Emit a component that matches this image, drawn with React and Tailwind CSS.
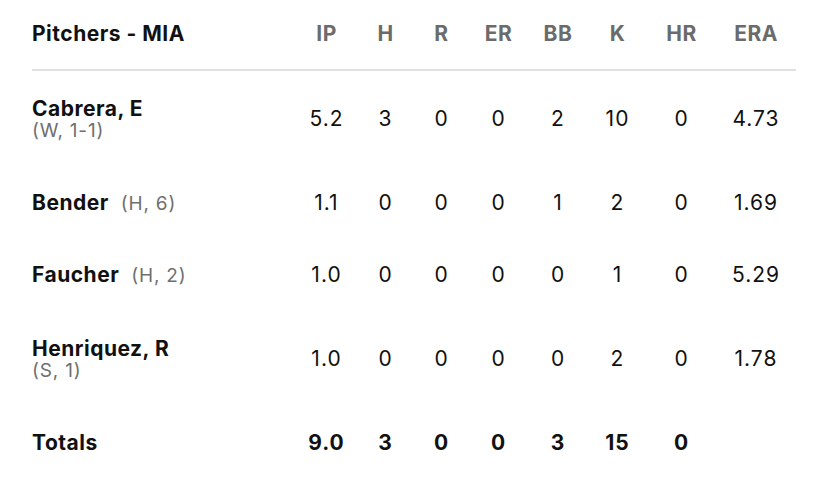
const COLS = ["IP", "H", "R", "ER", "BB", "K", "HR", "ERA"];

const PITCHERS = [
  { name: "Cabrera, E", note: "(W, 1-1)", stacked: true, stats: ["5.2", "3", "0", "0", "2", "10", "0", "4.73"] },
  { name: "Bender", note: "(H, 6)", stats: ["1.1", "0", "0", "0", "1", "2", "0", "1.69"] },
  { name: "Faucher", note: "(H, 2)", stats: ["1.0", "0", "0", "0", "0", "1", "0", "5.29"] },
  { name: "Henriquez, R", note: "(S, 1)", stacked: true, stats: ["1.0", "0", "0", "0", "0", "2", "0", "1.78"] },
];

const TOTALS = ["9.0", "3", "0", "0", "3", "15", "0", ""];

const grid = "grid grid-cols-[264px_61px_57px_55px_59px_60px_59px_69px_80px] items-center";

function PitcherName({ p }) {
  if (p.stacked) {
    return (
      <div className="flex flex-col leading-[22px] pt-[1px]">
        <span className="text-[21px] font-bold text-[#111]">{p.name}</span>
        <span className="text-[19px] text-[#6f6f6f] tracking-[0.8px]">{p.note}</span>
      </div>
    );
  }
  return (
    <div className="flex items-baseline gap-3">
      <span className="text-[21px] font-bold text-[#111]">{p.name}</span>
      <span className="text-[19px] text-[#6f6f6f] tracking-[0.8px]">{p.note}</span>
    </div>
  );
}

export default function App() {
  return (
    <div className="w-[828px] h-[485px] bg-white px-8 font-['Inter',sans-serif] text-[#111] tracking-[0.5px]">
      {/* header */}
      <div className={`${grid} h-[71px] pb-[1px] border-b-2 border-[#e0e0e0]`}>
        <div className="text-[21px] font-bold">Pitchers - MIA</div>
        {COLS.map((c) => (
          <div key={c} className="text-center text-[21px] font-bold text-[#6b6b6b]">{c}</div>
        ))}
      </div>

      {PITCHERS.map((p) => (
        <div key={p.name} className={`${grid} ${p.stacked ? "h-[96px]" : "h-[72px]"}`}>
          <PitcherName p={p} />
          {p.stats.map((s, i) => (
            <div key={i} className="text-center text-[21px] tracking-[1px]">{s}</div>
          ))}
        </div>
      ))}

      <div className={`${grid} h-[72px]`}>
        <div className="text-[21px] font-bold">Totals</div>
        {TOTALS.map((s, i) => (
          <div key={i} className="text-center text-[21px] font-bold tracking-[1px]">{s}</div>
        ))}
      </div>
    </div>
  );
}
